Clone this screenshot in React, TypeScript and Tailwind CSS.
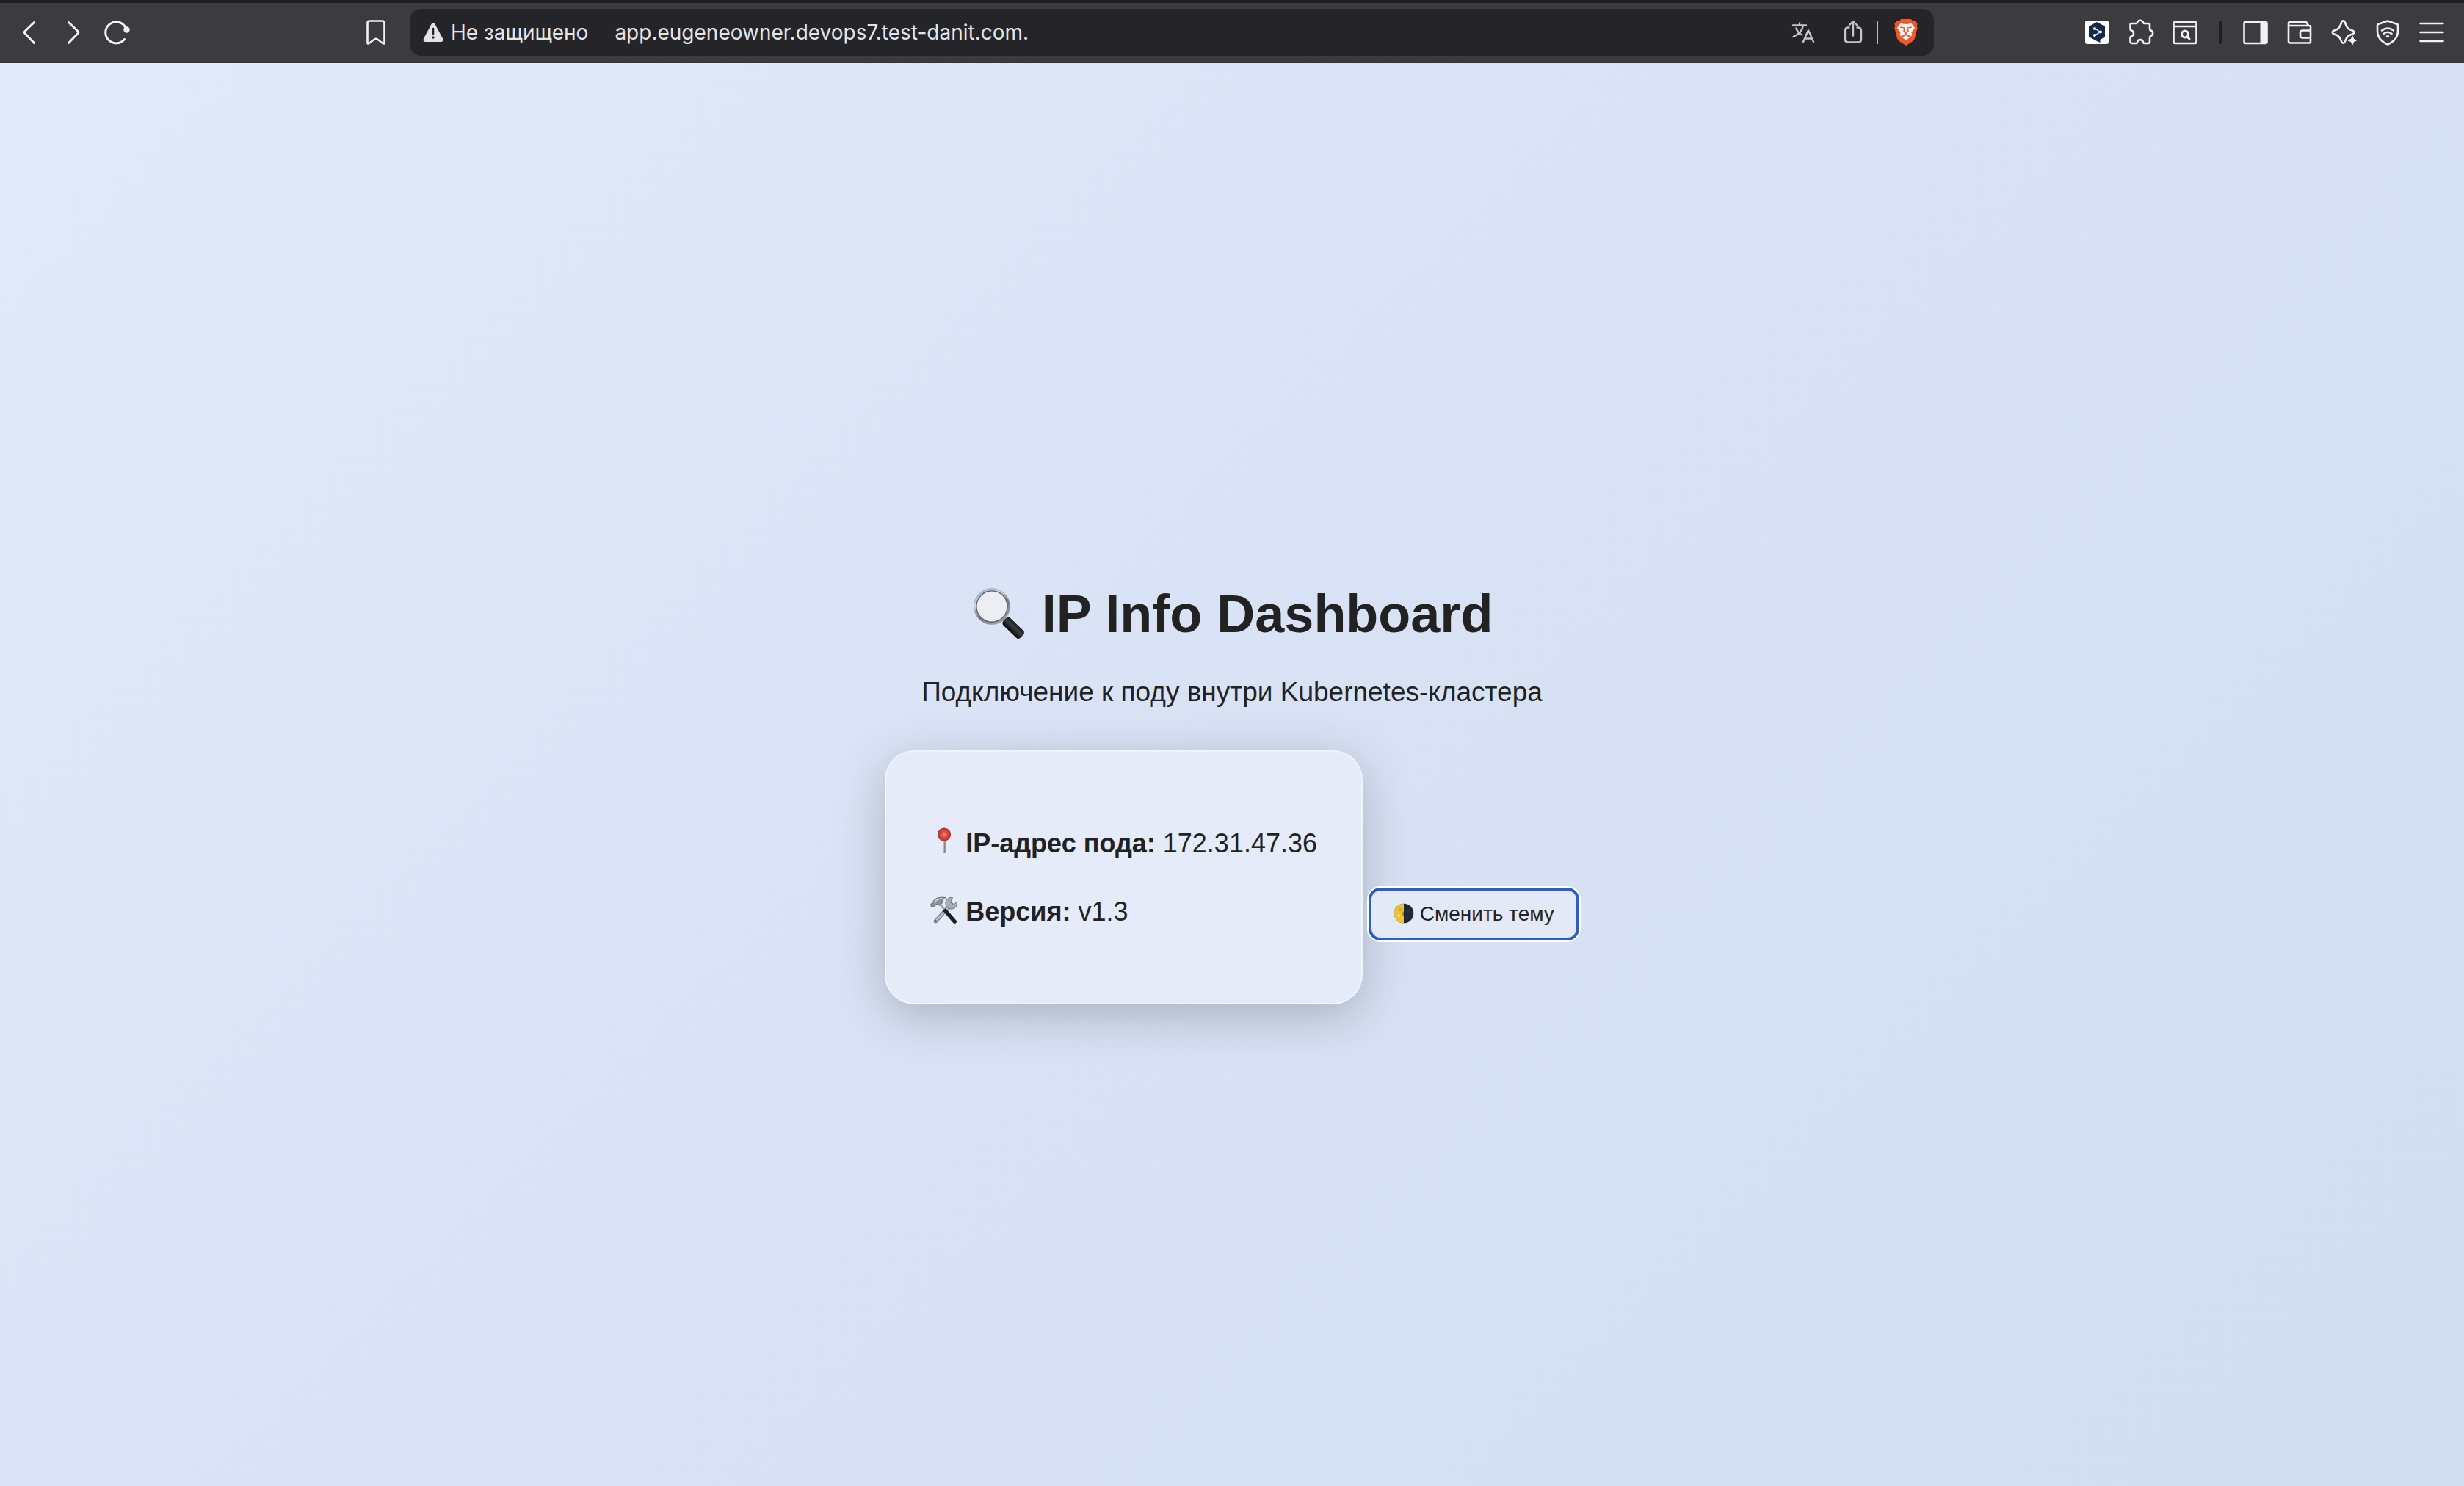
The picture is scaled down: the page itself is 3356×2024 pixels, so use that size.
import React from "react";

type IconProps = { className: string; viewBox: string; children: React.ReactNode };

function Icon({ className, viewBox, children }: IconProps) {
  return (
    <svg
      className={className}
      viewBox={viewBox}
      fill="none"
      stroke="currentColor"
      strokeWidth={3}
      strokeLinecap="round"
      strokeLinejoin="round"
      aria-hidden="true"
    >
      {children}
    </svg>
  );
}

function BarButton({ label, children }: { label: string; children: React.ReactNode }) {
  return (
    <button type="button" aria-label={label} className="flex size-9 shrink-0 items-center justify-center">
      {children}
    </button>
  );
}

function BraveLogo() {
  return (
    <svg className="h-9 w-8" viewBox="0 0 96 108" aria-hidden="true">
      <path
        d="M28 0H68L77 9L86 7L95 20L92 28L95 36L84 78Q82 86 76 90L48 108L20 90Q14 86 12 78L1 36L4 28L1 20L10 7L19 9Z"
        fill="#f05a28"
      />
      <path d="M26 18L48 21L70 18L84 36L70 54L74 65L64 72L48 64L32 72L22 65L26 54L12 36Z" fill="#fff" />
      <path d="M48 67L62 76L48 86L34 76Z" fill="#fff" />
      <path
        d="M24 33L42 36L39 50L48 57L57 50L54 36L72 33M48 57V63M32 70L48 62L64 70"
        fill="none"
        stroke="#f05a28"
        strokeWidth="5"
        strokeLinejoin="round"
      />
    </svg>
  );
}

function BrowserBar() {
  return (
    <header className="flex h-[86px] shrink-0 items-center border-t-4 border-b-2 border-t-[#1f1e24] border-b-[#343337] bg-[#3c3b40] font-[Inter,sans-serif] text-[#f1f1f4]">
      <nav className="flex w-[558px] shrink-0 items-center justify-between pr-7 pl-[22px]">
        <div className="flex gap-6">
          <BarButton label="Назад">
            <Icon className="size-9" viewBox="0 0 36 36">
              <path d="M24.500 4.500L12 16.500Q10.500 18 12 19.500L24.500 32.500" />
            </Icon>
          </BarButton>
          <BarButton label="Вперёд">
            <Icon className="size-9" viewBox="0 0 36 36">
              <path d="M11.500 4.500L24 16.500Q25.500 18 24 19.500L11.500 32.500" />
            </Icon>
          </BarButton>
          <BarButton label="Обновить">
            <Icon className="size-9" viewBox="0 0 36 36">
              <path d="M29 11.500A14.500 14.500 0 1 0 27.500 27.500" />
              <circle cx="30.500" cy="14.500" r="4.200" fill="currentColor" stroke="none" />
            </Icon>
          </BarButton>
        </div>
        <BarButton label="Закладка">
          <Icon className="size-9" viewBox="0 0 36 36">
            <path
              strokeWidth={2.6}
              d="M9.500 2.500H26.500Q29.500 2.500 29.500 5.500V32Q29.500 34.500 27.500 33L20 27.500Q18 26 16 27.500L8.500 33Q6.500 34.500 6.500 32V5.500Q6.500 2.500 9.500 2.500Z"
            />
          </Icon>
        </BarButton>
      </nav>

      <div className="flex h-16 grow items-center rounded-2xl bg-[#252429] pr-5 pl-[18px] text-[28px] leading-9 text-[#e4e3e8]">
        <svg className="mr-2.5 size-7 shrink-0" viewBox="0 0 28 28" aria-hidden="true">
          <path d="M11.600 2.800Q14 -0.800 16.400 2.800L27 22.500Q28.500 27 24.500 27H3.500Q-0.500 27 1 22.500Z" fill="#e4e3e8" />
          <path d="M14 9V16.500" stroke="#252429" strokeWidth="2.600" strokeLinecap="round" />
          <circle cx="14" cy="21" r="1.700" fill="#252429" />
        </svg>
        <span className="shrink-0">Не защищено</span>
        <input
          aria-label="Адрес страницы"
          className="ml-9 min-w-0 grow bg-transparent outline-none"
          defaultValue="app.eugeneowner.devops7.test-danit.com."
        />
        <div className="flex items-center text-[#c6c5ca]">
          <BarButton label="Перевести">
            <Icon className="size-9" viewBox="0 0 36 36">
              <path
                strokeWidth={2.4}
                d="M4 8.500H22M13 5.500V8.500M18 8.500C17 15 12 21 4.500 24M8.500 12.500C10 17 13 20 16.500 21.500M18 31L24.800 15.500H25.200L32 31M20.200 26.500H29.800"
              />
            </Icon>
          </BarButton>
          <span className="w-8" />
          <BarButton label="Поделиться">
            <Icon className="size-9" viewBox="0 0 36 36">
              <path
                strokeWidth={2.4}
                d="M12.500 11.500H11Q7 11.500 7 15.500V27.500Q7 31.500 11 31.500H25Q29 31.500 29 27.500V15.500Q29 11.500 25 11.500H23.500M18 22.500V3.500M13 8L18 3L23 8"
              />
            </Icon>
          </BarButton>
          <span className="mr-5 ml-3.5 h-8 w-0.5 bg-[#b9b8bd]" />
          <BarButton label="Brave Shields">
            <BraveLogo />
          </BarButton>
        </div>
      </div>

      <div className="flex shrink-0 items-center gap-6 pr-[26px] pl-[204px]">
        <BarButton label="DeepL">
          <svg className="size-9" viewBox="0 0 36 36" aria-hidden="true">
            <rect x="2" y="2" width="32" height="32" rx="3" fill="#fff" />
            <path d="M18 4L29 10V24L22.500 28V32L18 30L7 24V10Z" fill="#14284a" />
            <path d="M15 13L23 17.500L15 22" fill="none" stroke="#fff" strokeWidth="1.200" />
            <circle cx="15" cy="13" r="2" fill="#fff" />
            <circle cx="23" cy="17.500" r="2" fill="#fff" />
            <circle cx="15" cy="22" r="2" fill="#fff" />
          </svg>
        </BarButton>
        <BarButton label="Расширения">
          <Icon className="size-9" viewBox="0 0 36 36">
            <path
              strokeWidth={2.6}
              d="M5 6H11.500Q12.500 6 13 4.500C14.500 0.800 19.500 0.800 21 4.500Q21.500 6 22.500 6H28Q30 6 30 8V13.500Q30 15 31.500 15.500C35 17 35 21.500 31.500 23Q30 23.500 30 25V30.500Q30 33 27.500 33H22.500Q21.300 33 21 31.500C20 27 14 27 13 31.500Q12.700 33 11.500 33H6Q3.500 33 3.500 31V25Q3.500 24 5 23.500C9 22 9 17 5 15.500Q3.500 15 3.500 14V8Q3.500 6 5 6Z"
            />
          </Icon>
        </BarButton>
        <BarButton label="Поиск вкладок">
          <Icon className="size-9" viewBox="0 0 36 36">
            <rect x="2.500" y="4" width="31" height="29" rx="2" strokeWidth="2.600" />
            <path strokeWidth={2.6} d="M3 10H33" />
            <circle cx="18" cy="20.500" r="4.500" />
            <path d="M21 24L24 27" />
          </Icon>
        </BarButton>
        <span className="mx-1 h-8 w-1 rounded-sm bg-[#1f1e24]" />
        <BarButton label="Боковая панель">
          <Icon className="size-9" viewBox="0 0 36 36">
            <rect x="2.500" y="4" width="31" height="29" rx="2" strokeWidth="2.600" />
            <path fill="currentColor" stroke="none" d="M24.500 4H33V33H24.500Z" />
          </Icon>
        </BarButton>
        <BarButton label="Кошелёк">
          <Icon className="size-9" viewBox="0 0 36 36">
            <path
              strokeWidth={2.6}
              d="M3 9V30.500Q3 32.500 5 32.500H31Q33 32.500 33 30.500V11Q33 9 31 9H3V6Q3 4 5 4H27L30 8.500M33 15.500H22.500Q19 15.500 19 18V23Q19 25.500 22.500 25.500H33"
            />
          </Icon>
        </BarButton>
        <BarButton label="Leo AI">
          <Icon className="size-9" viewBox="0 0 36 36">
            <path
              strokeWidth={2.6}
              d="M15.300 4C16.200 1.800 18.800 1.800 19.700 4C21.500 9 22 12 26 14L30.500 15.800C32.800 16.700 32.800 19.300 30.500 20.200L26 22C22 24 21.500 27 19.700 31C18.800 33.200 16.200 33.200 15.300 31C13.500 27 13 24 9 22L4.500 20.200C2.200 19.300 2.200 16.700 4.500 15.800L9 14C13 12 13.500 9 15.300 4Z"
            />
            <path
              fill="#3c3b40"
              stroke="#3c3b40"
              strokeWidth={3}
              d="M30 23L31.800 27.200L36 29L31.800 30.800L30 35L28.200 30.800L24 29L28.200 27.200Z"
            />
            <path
              fill="currentColor"
              strokeWidth={1}
              d="M30 23L31.800 27.200L35.500 29L31.800 30.800L30 35L28.200 30.800L24 29L28.200 27.200Z"
            />
          </Icon>
        </BarButton>
        <BarButton label="VPN">
          <Icon className="size-9" viewBox="0 0 36 36">
            <path
              strokeWidth={2.6}
              d="M18 2.500L31 7Q32 7.500 32 8.500V16C32 25 26 31 18 34.500C10 31 4 25 4 16V8.500Q4 7.500 5 7Z"
            />
            <path strokeWidth={2.6} d="M10 15.500Q18 9.500 26 15.500M12.500 20Q18 15.500 23.500 20M17 23.500H19" />
          </Icon>
        </BarButton>
        <BarButton label="Меню">
          <Icon className="size-9" viewBox="0 0 36 36">
            <path strokeWidth={2.6} d="M2.500 6H33.500M2.500 18H33.500M2.500 30H33.500" />
          </Icon>
        </BarButton>
      </div>
    </header>
  );
}

function MagnifierEmoji() {
  return (
    <svg className="inline-block size-[76px] align-[-12px]" viewBox="0 0 72 72" role="img" aria-label="Лупа">
      <defs>
        <linearGradient id="rim" x1="0.200" y1="0" x2="0.800" y2="1">
          <stop offset="0" stopColor="#8fb6e6" />
          <stop offset="0.250" stopColor="#d5d9df" />
          <stop offset="0.600" stopColor="#75787d" />
          <stop offset="1" stopColor="#a9acb2" />
        </linearGradient>
        <linearGradient id="grip" x1="0" y1="0" x2="0" y2="1">
          <stop offset="0" stopColor="#17181a" />
          <stop offset="0.400" stopColor="#3b3d41" />
          <stop offset="1" stopColor="#060708" />
        </linearGradient>
      </defs>
      <path d="M40 42L46 48" stroke="#85888d" strokeWidth="6" />
      <circle cx="26.500" cy="27.500" r="21.500" fill="#eceef3" stroke="url(#rim)" strokeWidth="3.600" />
      <circle cx="26.500" cy="27.500" r="20" fill="none" stroke="#5c5e63" strokeWidth="1.200" />
      <circle cx="26.500" cy="27.500" r="23.200" fill="none" stroke="#8a93a3" strokeWidth="0.500" />
      <g transform="translate(43 44.500) rotate(44)">
        <rect x="0" y="-6.500" width="31" height="13" rx="4" fill="url(#grip)" />
      </g>
    </svg>
  );
}

function PinEmoji() {
  return (
    <svg className="inline-block size-[38px] align-[-4px]" viewBox="0 0 36 36" role="img" aria-label="Булавка">
      <defs>
        <radialGradient id="pin" cx="0.500" cy="0.500" r="0.500">
          <stop offset="0" stopColor="#ee8c80" />
          <stop offset="0.500" stopColor="#d84a41" />
          <stop offset="1" stopColor="#b92e2b" />
        </radialGradient>
      </defs>
      <path d="M18 16V33" stroke="#8d8783" strokeWidth="3.400" />
      <path d="M17.400 17V33" stroke="#bdb7b2" strokeWidth="1.200" />
      <circle cx="18" cy="9" r="8.600" fill="url(#pin)" />
    </svg>
  );
}

function ToolsEmoji() {
  return (
    <svg className="inline-block size-[38px] align-[-5px]" viewBox="0 0 36 36" role="img" aria-label="Инструменты">
      <path d="M27 10L7 32" stroke="#6e7177" strokeWidth="5" strokeLinecap="round" />
      <path d="M27 10L7 32" stroke="#c3c6cc" strokeWidth="2.600" strokeLinecap="round" />
      <path d="M29 1.500A7.500 7.500 0 1 0 34.500 7L30 10.500L26 7.500Z" fill="#a9adb4" stroke="#63666c" strokeWidth="0.800" />
      <circle cx="7.200" cy="31.500" r="1.200" fill="#55585d" />
      <path d="M12 9L20 19" stroke="#9ea2a9" strokeWidth="3" />
      <path d="M19.500 18.500L31.500 32.500" stroke="#1c1d20" strokeWidth="5" strokeLinecap="round" />
      <path
        d="M0.500 10L3 8C5 3 10 0 20 1.500C16 2.500 14.500 5 16 8L11.500 11.500L8.500 9.500L5 13.500L1.500 13.500Z"
        fill="#8c9198"
        stroke="#565a60"
        strokeWidth="0.800"
      />
      <path d="M5 8C8 3.500 12 2.500 16 2.500" stroke="#e2e5ea" strokeWidth="1.400" fill="none" />
    </svg>
  );
}

function MoonEmoji() {
  return (
    <svg className="inline-block size-7 align-[-4px]" viewBox="0 0 28 28" role="img" aria-label="Луна">
      <circle cx="14" cy="14" r="13.300" fill="#1c2738" />
      <path d="M14 0.700A13.300 13.300 0 0 0 14 27.300Z" fill="#eec03f" />
      <circle cx="9" cy="9" r="2.500" fill="#d9a637" />
      <circle cx="7" cy="17" r="2" fill="#f6d765" />
      <path d="M14 11L11 14L14 18Z" fill="#a77d2d" />
      <circle cx="20" cy="12" r="2.500" fill="#2a374b" />
      <circle cx="18" cy="20" r="2" fill="#28344a" />
    </svg>
  );
}

export default function App() {
  return (
    <div className="flex min-h-screen flex-col">
      <BrowserBar />
      <main className="flex grow flex-col items-center justify-center bg-linear-135 from-[#e2e9fb] via-[#d9e2f5] to-[#d0deef] pt-9 font-['Liberation_Sans',Arial,sans-serif] text-4xl text-[#222]">
        <h1 className="text-[72px] leading-[116px] font-bold">
          <MagnifierEmoji /> IP Info Dashboard
        </h1>
        <p className="mt-5 text-[37px] leading-[58px]">Подключение к поду внутри Kubernetes-кластера</p>
        <div className="mt-[50px] flex items-baseline-last gap-2">
          <section className="flex flex-col gap-9 rounded-[40px] border-2 border-white/40 bg-[#e5ebf8] px-[60px] py-24 leading-[57px] shadow-[0_16px_64px_rgba(31,38,50,0.25)]">
            <p>
              <PinEmoji /> <strong>IP-адрес пода:</strong> 172.31.47.36
            </p>
            <p>
              <ToolsEmoji /> <strong>Версия:</strong> v1.3
            </p>
          </section>
          <button
            type="button"
            className="rounded-2xl border-4 border-[#285fc8] bg-[#e3e9f7] px-[30px] py-4 text-[28px] leading-8 ring-2 ring-white"
          >
            <MoonEmoji /> Сменить тему
          </button>
        </div>
      </main>
    </div>
  );
}
